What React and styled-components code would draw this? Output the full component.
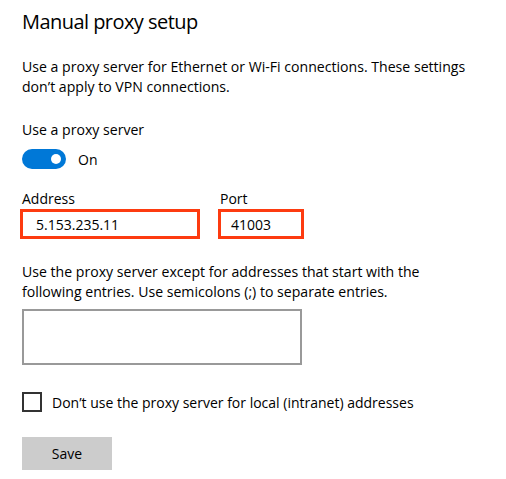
import React from 'react';
import styled, { createGlobalStyle } from 'styled-components';

const GlobalStyle = createGlobalStyle`
  html, body {
    margin: 0;
    padding: 0;
    background: #fff;
  }
  body {
    font-family: "Open Sans", "Noto Sans", sans-serif;
    color: #000;
  }
`;

const Page = styled.div`
  width: 506px;
  height: 479px;
  box-sizing: border-box;
  padding: 9px 22px 0;
  display: flex;
  flex-direction: column;
  align-items: flex-start;
`;

const Title = styled.h1`
  margin: 0;
  font-size: 20px;
  font-weight: 400;
  line-height: 26px;
  letter-spacing: -0.55px;
`;

const Text = styled.p`
  margin: ${({ $top }) => $top || 0}px 0 0;
  font-size: 14.1px;
  line-height: 20px;
`;

const Toggle = styled.div`
  margin-top: 9px;
  display: flex;
  align-items: center;
  gap: 12px;
  font-size: 14px;
`;

const Track = styled.div`
  width: 44px;
  height: 20px;
  border-radius: 10px;
  background: #0078d7;
  display: flex;
  align-items: center;
  justify-content: flex-end;
  padding-right: 5px;
  box-sizing: border-box;
`;

const Knob = styled.div`
  width: 10px;
  height: 10px;
  border-radius: 50%;
  background: #fff;
`;

const Fields = styled.div`
  margin-top: 20px;
  display: flex;
  gap: 18px;
  margin-left: -2px;
`;

const Field = styled.div`
  display: flex;
  flex-direction: column;
`;

const Label = styled.label`
  font-size: 14px;
  line-height: 20px;
  padding-left: 2px;
`;

const Input = styled.div`
  width: ${({ $w }) => $w}px;
  height: 30px;
  box-sizing: border-box;
  border: 3px solid #fd3b10;
  display: flex;
  align-items: center;
  padding-left: ${({ $pad }) => $pad}px;
  font-size: 14px;
`;

const Box = styled.div`
  margin-top: 7px;
  width: 280px;
  height: 56px;
  box-sizing: border-box;
  border: 2px solid #999;
`;

const Check = styled.div`
  margin-top: 27px;
  display: flex;
  align-items: center;
  gap: 10px;
  font-size: 14px;
`;

const Square = styled.div`
  width: 20px;
  height: 20px;
  box-sizing: border-box;
  border: 2px solid #333;
`;

const Button = styled.button`
  margin-top: 25px;
  width: 90px;
  height: 33px;
  border: none;
  background: #ccc;
  font-family: inherit;
  font-size: 14px;
  color: #000;
  padding: 0;
`;

export default function App() {
  return (
    <>
      <GlobalStyle />
      <Page>
        <Title>Manual proxy setup</Title>
        <Text $top={22}>
          Use a proxy server for Ethernet or Wi-Fi connections. These settings
          <br />
          don’t apply to VPN connections.
        </Text>
        <Text $top={23}>Use a proxy server</Text>
        <Toggle>
          <Track>
            <Knob />
          </Track>
          On
        </Toggle>
        <Fields>
          <Field>
            <Label>Address</Label>
            <Input $w={180} $pad={13}>5.153.235.11</Input>
          </Field>
          <Field>
            <Label>Port</Label>
            <Input $w={86} $pad={10}>41003</Input>
          </Field>
        </Fields>
        <Text $top={23}>
          Use the proxy server except for addresses that start with the
          <br />
          following entries. Use semicolons (;) to separate entries.
        </Text>
        <Box />
        <Check>
          <Square />
          Don’t use the proxy server for local (intranet) addresses
        </Check>
        <Button>Save</Button>
      </Page>
    </>
  );
}
